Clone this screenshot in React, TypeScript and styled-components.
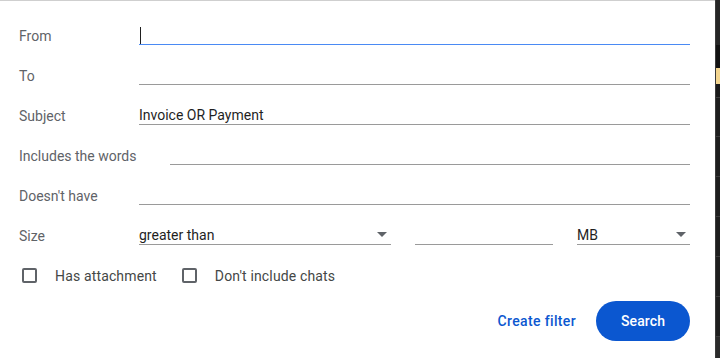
import styled, { createGlobalStyle } from 'styled-components'

const GlobalStyle = createGlobalStyle`
  html, body {
    margin: 0;
    padding: 0;
    background: #1b1b1b;
    overflow: hidden;
  }
  * {
    box-sizing: border-box;
  }
`

const Page = styled.div`
  display: flex;
  width: 720px;
  height: 358px;
  font-family: Roboto, 'Liberation Sans', sans-serif;
`

const Panel = styled.div`
  width: 715px;
  height: 358px;
  background: #fff;
  border-top: 1px solid #cfcfcf;
  padding: 14px 25px 0 19px;
  display: flex;
  flex-direction: column;
`

const Row = styled.div`
  display: flex;
  align-items: center;
  height: 40px;
`

const Label = styled.div`
  min-width: 120px;
  padding: 1px 34px 0 0;
  font-size: 14px;
  line-height: 20px;
  color: #5f6368;
  white-space: nowrap;
`

const Field = styled.div<{ $focused?: boolean; $width?: number }>`
  display: flex;
  align-items: center;
  justify-content: space-between;
  height: 20px;
  padding-top: 2px;
  ${(p) => (p.$width ? `width: ${p.$width}px; flex: none;` : 'flex: 1;')}
  border-bottom: 1px solid ${(p) => (p.$focused ? '#4a8af4' : '#9a9a9a')};
  font-size: 14px;
  line-height: 17px;
  color: #1f1f1f;
`

const Caret = styled.span`
  display: block;
  width: 1px;
  height: 17px;
  margin: -1px 0 0 1px;
  background: #1f1f1f;
`

const Arrow = styled.span`
  width: 0;
  height: 0;
  margin: -2px 4px 0 0;
  border-left: 5px solid transparent;
  border-right: 5px solid transparent;
  border-top: 5px solid #5f6368;
`

const SizeFields = styled.div`
  flex: 1;
  display: flex;
  gap: 24px;
`

const CheckRow = styled.div`
  display: flex;
  align-items: center;
  height: 40px;
  gap: 22px;
`

const CheckItem = styled.label`
  display: flex;
  align-items: center;
  gap: 18px;
  padding-top: 1px;
  font-size: 14px;
  line-height: 20px;
  color: #444746;
  letter-spacing: 0.15px;
`

const Box = styled.span`
  width: 15px;
  height: 15px;
  margin: -1px 0 0 3px;
  border: 2px solid #5f6368;
  border-radius: 2px;
`

const Actions = styled.div`
  display: flex;
  justify-content: flex-end;
  align-items: center;
  gap: 20px;
  margin-top: 6px;
`

const TextButton = styled.span`
  font-size: 14px;
  font-weight: 500;
  color: #0b57d0;
  letter-spacing: 0.35px;
`

const PrimaryButton = styled.span`
  display: flex;
  align-items: center;
  justify-content: center;
  width: 94px;
  height: 40px;
  border-radius: 20px;
  background: #0b57d0;
  color: #fff;
  font-size: 14px;
  font-weight: 500;
  letter-spacing: 0.1px;
`

const Strip = styled.div`
  flex: 1;
  display: flex;
  flex-direction: column;
  border-left: 1px solid #3a3a3a;
  background: #1e1e1e;
`

const StripBlock = styled.div<{ $h: number; $bg: string; $line?: boolean }>`
  height: ${(p) => p.$h}px;
  background: ${(p) => p.$bg};
  border-bottom: ${(p) => (p.$line ? '1px solid #3c3c3c' : 'none')};
`

const fields = [
  { label: 'From', value: '', focused: true },
  { label: 'To', value: '' },
  { label: 'Subject', value: 'Invoice OR Payment' },
  { label: 'Includes the words', value: '' },
  { label: "Doesn't have", value: '' },
]

const stripBlocks = [
  { h: 45, bg: '#262626' },
  { h: 23, bg: '#121212' },
  { h: 16, bg: '#f3d58f' },
  { h: 14, bg: '#1a1a1a', line: true },
  { h: 39, bg: '#1e1e1e', line: true },
  { h: 40, bg: '#1e1e1e', line: true },
  { h: 40, bg: '#1e1e1e', line: true },
  { h: 40, bg: '#1e1e1e', line: true },
  { h: 40, bg: '#1e1e1e', line: true },
  { h: 40, bg: '#1e1e1e', line: true },
  { h: 21, bg: '#2b2b2b' },
]

const App = () => {
  return (
    <>
      <GlobalStyle />
      <Page>
        <Panel>
          {fields.map((f) => (
            <Row key={f.label}>
              <Label>{f.label}</Label>
              <Field $focused={f.focused}>
                {f.focused ? <Caret /> : <span>{f.value}</span>}
              </Field>
            </Row>
          ))}
          <Row>
            <Label>Size</Label>
            <SizeFields>
              <Field $width={252}>
                <span>greater than</span>
                <Arrow />
              </Field>
              <Field $width={138} />
              <Field $width={113}>
                <span>MB</span>
                <Arrow />
              </Field>
            </SizeFields>
          </Row>
          <CheckRow>
            <CheckItem>
              <Box />
              Has attachment
            </CheckItem>
            <CheckItem>
              <Box />
              Don't include chats
            </CheckItem>
          </CheckRow>
          <Actions>
            <TextButton>Create filter</TextButton>
            <PrimaryButton>Search</PrimaryButton>
          </Actions>
        </Panel>
        <Strip>
          {stripBlocks.map((b, i) => (
            <StripBlock key={i} $h={b.h} $bg={b.bg} $line={b.line} />
          ))}
        </Strip>
      </Page>
    </>
  )
}

export default App
